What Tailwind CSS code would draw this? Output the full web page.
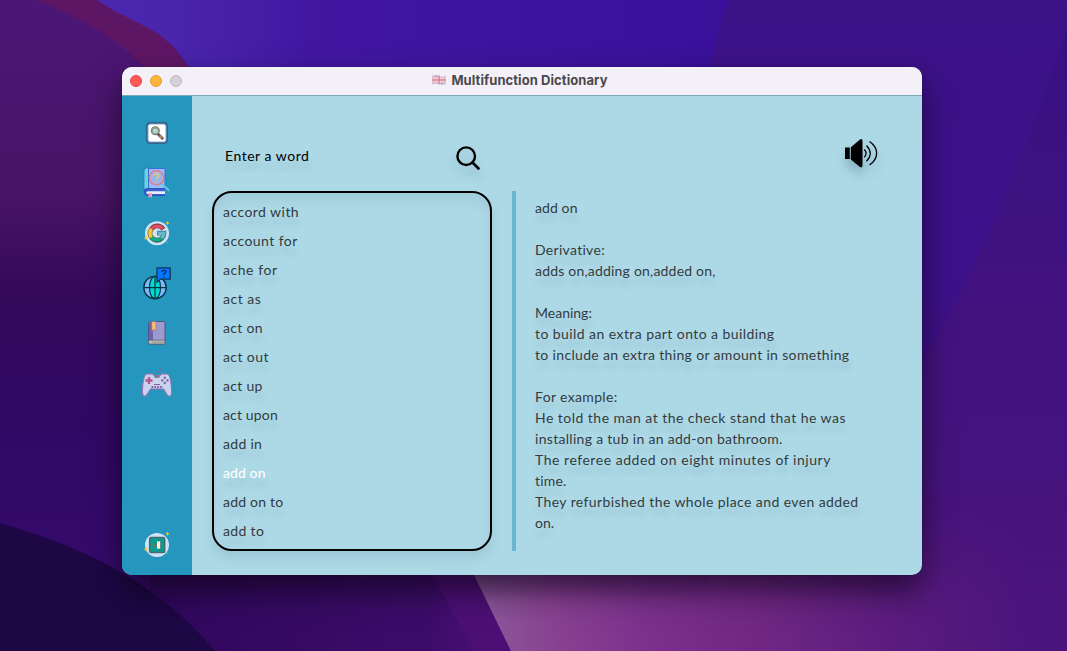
<!DOCTYPE html>
<html lang="en">
<head>
<meta charset="utf-8">
<title>Multifunction Dictionary</title>
<script src="https://cdn.jsdelivr.net/npm/@tailwindcss/browser@4"></script>
</head>
<body class="relative h-[651px] w-[1067px] overflow-hidden bg-[#350e60]">
<!-- Desktop wallpaper -->
<svg class="absolute inset-0 h-full w-full" viewBox="0 0 1067 651">
<defs>
<linearGradient id="left" x1="0" y1="0" x2="0" y2="1"><stop offset="0" stop-color="#4c1676"/><stop offset=".3" stop-color="#481467"/><stop offset=".45" stop-color="#34095b"/><stop offset=".65" stop-color="#300864"/><stop offset="1" stop-color="#380b70"/></linearGradient>
<linearGradient id="top" x1="0" x2="1" y1="0" y2="0"><stop offset="0" stop-color="#4c27af"/><stop offset=".13" stop-color="#4925ab"/><stop offset=".33" stop-color="#4117a2"/><stop offset="1" stop-color="#38109a"/></linearGradient>
<linearGradient id="right" x1="0" y1="0" x2="0" y2="1"><stop offset="0" stop-color="#3c1287"/><stop offset=".4" stop-color="#3c118b"/><stop offset=".62" stop-color="#420f83"/><stop offset="1" stop-color="#4c157a"/></linearGradient>
<linearGradient id="edge" x1="0" y1="0" x2="0" y2="1"><stop offset="0" stop-color="#371083"/><stop offset=".45" stop-color="#42127f"/><stop offset="1" stop-color="#4a157c"/></linearGradient>
<linearGradient id="petal" x1="480" y1="575" x2="1020" y2="500" gradientUnits="userSpaceOnUse"><stop offset="0" stop-color="#8b5799"/><stop offset=".13" stop-color="#884091"/><stop offset=".3" stop-color="#7a308c"/><stop offset=".5" stop-color="#6f2783"/><stop offset=".75" stop-color="#5a1b7e"/><stop offset="1" stop-color="#4a147d"/></linearGradient>
<linearGradient id="petalFade" x1="0" y1="500" x2="0" y2="600" gradientUnits="userSpaceOnUse"><stop offset="0" stop-color="#fff" stop-opacity="0"/><stop offset="1" stop-color="#fff"/></linearGradient>
<mask id="petalMask"><rect x="400" y="480" width="667" height="171" fill="url(#petalFade)"/></mask>
<linearGradient id="low" x1="170" y1="0" x2="510" y2="0" gradientUnits="userSpaceOnUse"><stop offset="0" stop-color="#30085d"/><stop offset=".75" stop-color="#3c0c69"/><stop offset="1" stop-color="#4f107c"/></linearGradient>
</defs>
<rect width="1067" height="651" fill="url(#left)"/>
<path d="M95 0C125 24 155 20 192 70L300 300H740V0Z" fill="url(#top)"/>
<path d="M34 0H97C116 14 145 24 161 36Q180 50 191 72H150C125 48 90 18 34 0Z" fill="#5d1664"/>
<path d="M730 0Q715 30 709 80V651H1067V0Z" fill="url(#right)"/>
<path d="M1067 30C1025 150 980 270 920 365V651H1067Z" fill="url(#edge)"/>
<path d="M150 560H470L515 651H150Z" fill="url(#low)"/>
<path d="M432 575H474L511 651H474Z" fill="#4c0f76"/>
<path d="M440 500H1067V651H511L474 575Z" fill="url(#petal)" mask="url(#petalMask)"/>
<path d="M0 523C85 548 155 580 215 651H0Z" fill="#1d0745"/>
</svg>

<main class="absolute left-[122px] top-[67px] flex h-[508px] w-[800px] flex-col overflow-hidden rounded-[10px] bg-[#add8e6] shadow-[0_16px_32px_rgba(0,0,0,0.55),0_0_1px_rgba(0,0,0,0.5)]">
  <header class="grid h-[29px] shrink-0 grid-cols-[80px_1fr_85px] items-center border-b border-[#7ba9b5] bg-[#f4f0f7]">
    <div class="flex gap-2 pl-2">
      <span class="size-3 rounded-full border border-[#df4744] bg-[#ff5a56]"></span>
      <span class="size-3 rounded-full border border-[#dfa035] bg-[#ffb53b]"></span>
      <span class="size-3 rounded-full border border-[#bdbac0] bg-[#d4d1d7]"></span>
    </div>
    <h1 class="flex items-center justify-center gap-[5px] whitespace-nowrap pb-[2px] pl-px font-['Inter'] text-[13px] font-bold leading-4 tracking-[.07px] text-[#4b484d]">
      <svg class="h-2.5 w-[14px]" viewBox="0 0 14 10"><path d="M0 1Q4-.3 7 1T14 1V9Q10 10 7 9T0 9Z" fill="#a8a2c5"/><path d="M0 1L14 9M14 1L0 9" stroke="#f4e6ed" stroke-width="2"/><path d="M0 1L14 9M14 1L0 9" stroke="#d98498" stroke-width=".7"/><path d="M7 .5V9.5M0 5H14" stroke="#f5e7ed" stroke-width="3"/><path d="M7 .5V9.5M0 5H14" stroke="#dc7d90" stroke-width="1.5"/></svg>
      <span>Multifunction Dictionary</span>
    </h1>
  </header>
  <div class="flex min-h-0 flex-1">
    <nav class="flex w-[70px] shrink-0 flex-col items-center bg-[#2596be] pb-[13px] pt-[20px]">
      <div class="flex flex-col items-center gap-[16px]">
      <svg class="size-[34px]" viewBox="0 0 34 34"><rect x="6.8" y="6.8" width="20.4" height="20.4" rx="3.5" fill="#7ba9e2" stroke="#34516f" stroke-width="1.2"/><rect x="8.5" y="8.5" width="17" height="17" rx="2" fill="#fff"/><path d="M18.2 18.3L22.3 22.3" stroke="#594e4c" stroke-width="2.8" stroke-linecap="round"/><path d="M19.5 19.5L22 22" stroke="#de8d6b" stroke-width="1.5"/><circle cx="15.3" cy="14.8" r="3.6" fill="#afd9df" stroke="#6b735d" stroke-width="1.9"/><circle cx="15.3" cy="14.8" r="3.5" fill="none" stroke="#b1b18d" stroke-width=".8"/></svg>
      <svg class="size-[34px]" viewBox="0 -1 34 34"><path d="M6.5 1H10V22H6Q4 22 4 24V4Q4 1 6.5 1Z" fill="#62d8de" stroke="#396fc5" stroke-width=".8"/><path d="M8.5 1.5H25V22H8.5Z" fill="#94bfff" stroke="#416bd2"/><path d="M25 21.5H7Q3.7 22 4 25T8 28.5H25" fill="#3a61cc" stroke="#2754c0"/><path d="M8 24.2H25V27H7Q5 25 8 24.2Z" fill="#e9eeff"/><path d="M8.5 26H12V31L10.2 29.6 8.5 31Z" fill="#ff9c9d"/><path d="M21.5 16.5L29 23.5" stroke="#59cbe3" stroke-width="2"/><circle cx="16.5" cy="10.8" r="7" fill="#8fb5f4" stroke="#d97588" stroke-width="1.6"/><circle cx="16.5" cy="10.8" r="6.2" fill="none" stroke="#f0a6b0" stroke-width=".8"/><path d="M14.2 8.8Q14.3 6.8 16.6 6.8C20 7 19 10 16.8 10.8V12.6M16.8 14V15.2" fill="none" stroke="#d9cb82" stroke-width="1.4"/></svg>
      <svg class="size-[34px]" viewBox="0 0 34 34"><circle cx="17" cy="17.2" r="12" fill="#d3e3f7"/><g fill="none" stroke-width="4.8"><path d="M23.3 13.2A7 7 0 0 0 11.4 13.1" stroke="#69464e"/><path d="M11.4 13.1A7 7 0 0 0 11.4 21.4" stroke="#6f6434"/><path d="M11.4 21.4A7 7 0 0 0 22.1 22.1" stroke="#276755"/><path d="M17.2 17.1H24Q24 20 22 22.1" stroke="#346b83"/></g><g fill="none" stroke-width="3.4"><path d="M22.7 12.8A7 7 0 0 0 11.4 13.1" stroke="#e64b59"/><path d="M11.4 13.1A7 7 0 0 0 11.4 21.4" stroke="#ffc72e"/><path d="M11.4 21.4A7 7 0 0 0 21.4 22.2" stroke="#16a783"/><path d="M18 17.2H24Q23.7 20 21.6 22.2" stroke="#66b7c7"/></g><path d="M27.5 4.9L28.2 6.3 29.7 7 28.2 7.7 27.5 9.2 26.8 7.7 25.3 7 26.8 6.3Z" fill="#ffc218"/><circle cx="6" cy="22" r="1.5" fill="#ffc531"/><circle cx="27.5" cy="26.5" r="1" fill="#42b79b"/></svg>
      <svg class="size-[34px]" viewBox="0 -.7 34 34"><circle cx="15" cy="20.8" r="11.2" fill="#79baff" stroke="#092f3c" stroke-width="1.3"/><ellipse cx="15" cy="20.8" rx="5.5" ry="11.2" fill="#00dbd4" stroke="#08343d" stroke-width="1.2"/><path d="M15 9.6V32M4 21H26" stroke="#08343d" stroke-width="1.2"/><path d="M17 1.2H30.2V12.5H20.3L17 15.5V12.5Z" fill="#0775ff" stroke="#103954" stroke-width="1.3"/><path d="M21.7 5.3Q22 3.5 24 3.6C27 3.8 26 6.2 23.8 7.3V8.6M23.8 9.8V10.8" fill="none" stroke="#092957" stroke-width="1.2"/></svg>
      <svg class="size-[34px]" viewBox="0 0 34 34"><path d="M11 5.5H24Q25 5.5 25 7V28H10Q8.5 28 8.5 26V8Q8.5 5.5 11 5.5Z" fill="#9c9bd0" stroke="#4e5583"/><path d="M9 8V24.5H13V6H11Q9 6 9 8Z" fill="#6e63ae"/><path d="M9.5 24.2H25V28H10Q8.5 28 8.5 26T9.5 24.2Z" fill="#c9c5c1" stroke="#5f6477" stroke-width=".8"/><path d="M11.8 26.2H25" stroke="#848384" stroke-width=".8"/><path d="M11.7 5.5H16V15L13.9 13.5 11.7 15Z" fill="#ffbc6a" stroke="#9b6a62" stroke-width=".6"/></svg>
      <svg class="size-[34px]" viewBox="0 0 34 34"><path d="M17.5 11V7Q17.5 5.8 19.5 5.5T21 3.5V1" fill="none" stroke="#856bae" stroke-width="1"/><path d="M7 8H12Q14 8.3 14 9.5H20Q20 8.3 23 8H27C30 8 31 15 31.6 24C32 32.5 28 31 26 27L23.5 23H10.5L8 27C5 32 2 31 2.4 24C3 15 4 8 7 8Z" fill="#c9d3f0" stroke="#9871ae" stroke-width="1.1"/><path d="M13.5 9.5H20.5L19 12H15Z" fill="#7e7d9a"/><path d="M9 11V18M5.5 14.5H12.5" stroke="#b45789" stroke-width="2.3"/><g fill="#7b63a5"><circle cx="24.8" cy="11.8" r="1.2"/><circle cx="24.8" cy="17" r="1.2"/><circle cx="22.2" cy="14.4" r="1.2"/><circle cx="27.4" cy="14.4" r="1.2"/></g><path d="M14 18.5H20" stroke="#84639e"/><path d="M11.5 21H23" stroke="#826aa5" stroke-width="1.8" stroke-dasharray="1.8 1"/></svg>
      </div>
      <svg class="mt-auto size-[34px]" viewBox="0 0 34 34"><circle cx="17" cy="17" r="12" fill="#d0e2f6"/><rect x="9.7" y="9.5" width="15" height="15" rx="1.5" fill="#079f91" stroke="#496970" stroke-width="1.5"/><path d="M17 13H20.5V21H17" fill="#fff4d2" stroke="#396e68" stroke-width=".6"/><path d="M12.5 17H16M14.5 14.8L17 17 14.5 19.2Z" fill="#627575" stroke="#627575"/><path d="M27.5 3.5L28.2 5 29.7 5.8 28.2 6.6 27.5 8.1 26.8 6.6 25.3 5.8 26.8 5Z" fill="#ffc218"/><circle cx="6" cy="21.2" r="1.5" fill="#ffc531"/><circle cx="27" cy="25.2" r="1" fill="#42b79b"/></svg>
    </nav>
    <section class="flex min-w-0 flex-1 flex-col pl-5 font-['Lato','Comic_Sans_MS',sans-serif] text-[14px]">
      <div class="flex h-[95px] shrink-0 pl-[13px]">
        <div class="mt-[49px] h-[21px] w-[229px] whitespace-nowrap leading-[21px] tracking-[.52px] text-black [text-shadow:1px_9px_6px_rgba(20,70,90,.12)]">Enter a word</div>
        <svg class="mt-[48px] size-[28px] drop-shadow-[0_8px_4px_rgba(20,70,90,.2)]" viewBox="0 0 28 28"><circle cx="12.2" cy="12.2" r="8.8" fill="none" stroke="#000" stroke-width="2.4"/><path d="M18.5 18.5L24.5 24.5" stroke="#000" stroke-width="2.6" stroke-linecap="round"/></svg>
        <svg class="ml-[362px] mt-[42px] h-[32px] w-[34px] drop-shadow-[0_8px_5px_rgba(20,70,90,.25)]" viewBox="0 0 34 32"><path d="M1 9.5H5.8V21H1ZM6.8 9.3L16 1.4Q18.5.2 18.5 3V27Q18.5 30.5 16 29L6.8 21.4Z"/><path d="M20.3 11.5Q24 15.3 20.3 19.2M22.5 7.5Q30 15.5 22.5 23.3M25.5 3.5C35 10 35 20.5 25.5 27" fill="none" stroke="#000" stroke-width="1.3"/></svg>
      </div>
      <div class="flex">
        <ul class="h-[360px] w-[280px] rounded-[20px] border-2 border-black pl-[9px] pt-[4px] leading-[29px] text-[#333b3e] shadow-[0_8px_10px_rgba(60,110,130,.13),inset_0_8px_10px_rgba(60,110,130,.1)] [text-shadow:1px_9px_6px_rgba(20,70,90,.12)]">
          <li class="tracking-[.45px]">accord with</li><li class="tracking-[.45px]">account for</li><li class="tracking-[.55px]">ache for</li><li class="tracking-[.5px]">act as</li><li class="tracking-[.3px]">act on</li><li class="tracking-[.4px]">act out</li><li class="tracking-[.3px]">act up</li><li class="tracking-[.15px]">act upon</li><li class="tracking-[.3px]">add in</li><li class="tracking-[.1px] text-white">add on</li><li class="tracking-[.2px]">add on to</li><li class="tracking-[.35px]">add to</li>
        </ul>
        <div class="ml-5 h-[360px] w-1 bg-[#68b6d2]"></div>
        <article class="ml-[19px] whitespace-nowrap pt-[6px] leading-[21px] text-[#333b3e] [text-shadow:1px_9px_6px_rgba(20,70,90,.12)]">
          <p class="tracking-[.1px]">add on</p><br>
          <p class="tracking-[.3px]">Derivative:</p><p class="tracking-[.2px]">adds on,adding on,added on,</p><br>
          <p>Meaning:</p><p class="tracking-[.43px]">to build an extra part onto a building</p><p class="tracking-[.34px]">to include an extra thing or amount in something</p><br>
          <p class="tracking-[.35px]">For example:</p><p class="tracking-[.47px]">He told the man at the check stand that he was</p><p class="tracking-[.3px]">installing a tub in an add-on bathroom.</p><p class="tracking-[.53px]">The referee added on eight minutes of injury</p><p class="tracking-[.2px]">time.</p><p class="tracking-[.4px]">They refurbished the whole place and even added</p><p>on.</p>
        </article>
      </div>
    </section>
  </div>
</main>
</body>
</html>
